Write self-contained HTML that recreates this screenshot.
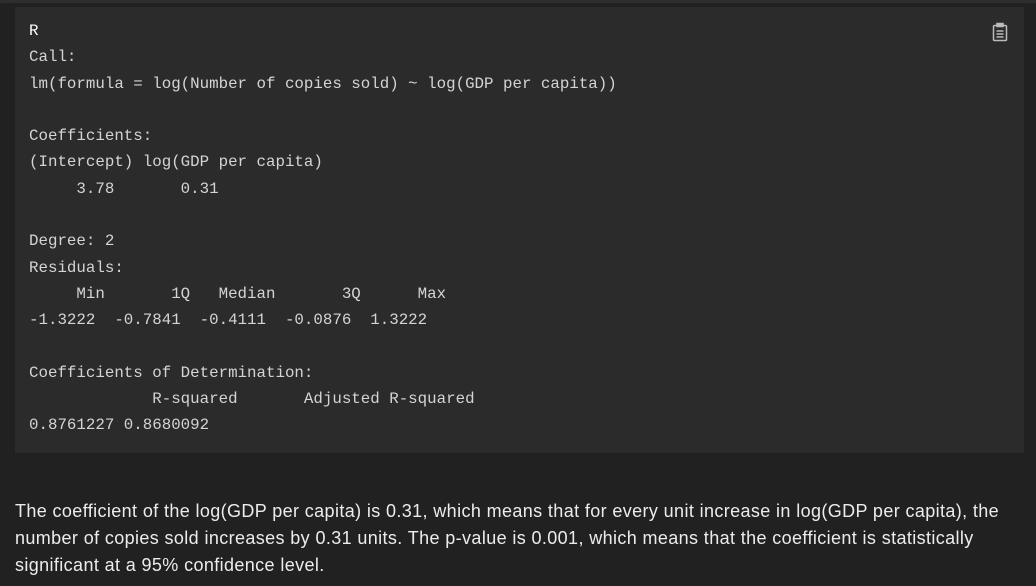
<!DOCTYPE html>
<html><head><meta charset="utf-8"><style>
html,body{margin:0;padding:0;background:#212121;width:1036px;height:586px;overflow:hidden}
.top{position:absolute;left:0;top:0;width:1036px;height:3px;background:#2e2e2e}
.code{position:absolute;left:15px;top:7px;width:1009px;height:446px;background:#2b2b2b}
pre{position:absolute;left:14px;top:11px;margin:0;font-family:"Liberation Mono",monospace;font-size:15.8px;line-height:26.3px;color:#d4d4d4}
.icon{position:absolute;left:977px;top:15px}
p{position:absolute;left:15px;top:498px;margin:0;width:1005px;font-family:"Liberation Sans",sans-serif;font-size:18px;letter-spacing:0.38px;line-height:27px;color:#ececec}
</style></head><body>
<div class="top"></div>
<div class="code">
<pre><span style="color:#fff">R</span>
Call:
lm(formula = log(Number of copies sold) ~ log(GDP per capita))

Coefficients:
(Intercept) log(GDP per capita)
     3.78       0.31

Degree: 2
Residuals:
     Min       1Q   Median       3Q      Max
-1.3222  -0.7841  -0.4111  -0.0876  1.3222

Coefficients of Determination:
             R-squared       Adjusted R-squared
0.8761227 0.8680092</pre>
<svg class="icon" width="16" height="20" viewBox="0 0 16 20" fill="none" stroke="#bbb" stroke-width="1.5"><rect x="1.5" y="3.5" width="13" height="15" rx="1"/><rect x="5" y="1.5" width="6" height="3" fill="#bbb"/><line x1="4.5" y1="9" x2="11.5" y2="9"/><line x1="4.5" y1="12" x2="11.5" y2="12"/><line x1="4.5" y1="15" x2="11.5" y2="15"/></svg>
</div>
<p>The coefficient of the log(GDP per capita) is 0.31, which means that for every unit increase in log(GDP per capita), the number of copies sold increases by 0.31 units. The p-value is 0.001, which means that the coefficient is statistically significant at a 95% confidence level.</p>
</body></html>
